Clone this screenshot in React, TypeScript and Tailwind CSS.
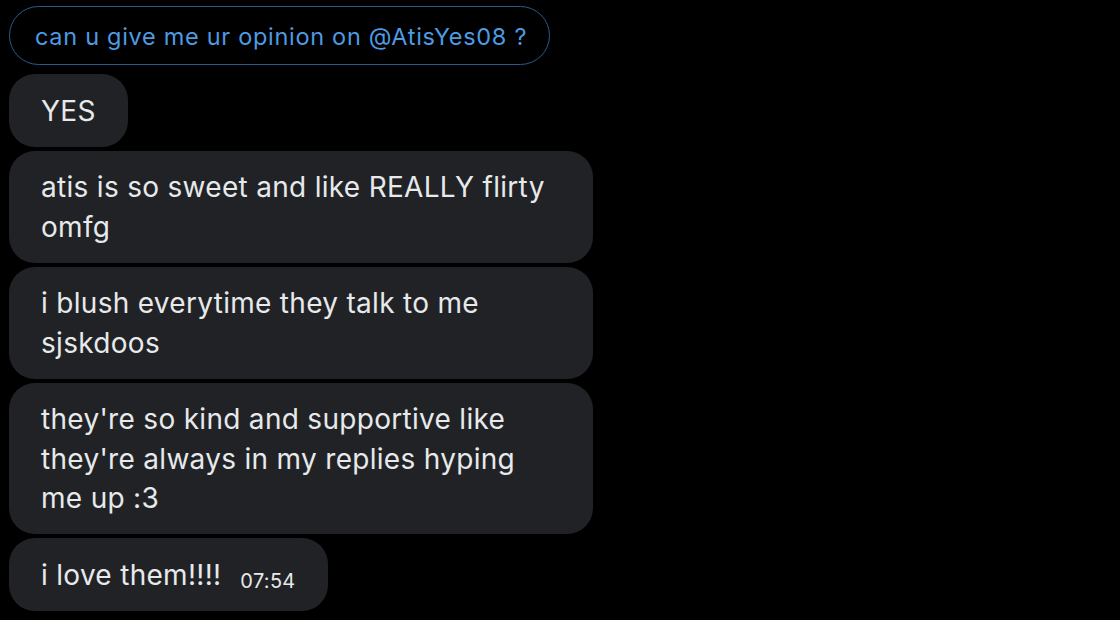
import React from "react";

const font = { fontFamily: "Inter, 'Noto Sans', 'Liberation Sans', sans-serif" };

function Bubble({ children, wide }: { children: React.ReactNode; wide?: boolean }) {
  return (
    <div
      className={`${wide ? "w-[584px]" : "self-start"} rounded-[26px] bg-[#202226] px-[32px] pt-[17.5px] pb-[15.5px] text-[28px] leading-[39.5px] text-[#e7e9ea] tracking-[0.3px]`}
    >
      {children}
    </div>
  );
}

export default function App() {
  return (
    <div className="w-[1120px] h-[620px] bg-black overflow-hidden" style={font}>
      <div className="flex flex-col pl-[9px] pt-[6px]">
        <div className="self-start w-[541px] h-[59px] rounded-full border-[1.5px] border-[#2a5a8c] flex items-center pl-[25px] pt-[3px] text-[23.5px] text-[#4d9be3] tracking-[0.7px]">
          can u give me ur opinion on @AtisYes08 ?
        </div>
        <div className="flex flex-col gap-[4px] mt-[9px]">
          <Bubble>YES</Bubble>
          <Bubble wide>
            atis is so sweet and like REALLY flirty
            <br />
            omfg
          </Bubble>
          <Bubble wide>
            i blush everytime they talk to me
            <br />
            sjskdoos
          </Bubble>
          <Bubble wide>
            they're so kind and supportive like
            <br />
            they're always in my replies hyping
            <br />
            me up :3
          </Bubble>
          <Bubble>
            i love them!!!!
            <span className="ml-[19px] text-[20px] leading-none text-[#e7e9ea] tracking-[0.3px] relative top-[3px]">07:54</span>
          </Bubble>
        </div>
      </div>
    </div>
  );
}
